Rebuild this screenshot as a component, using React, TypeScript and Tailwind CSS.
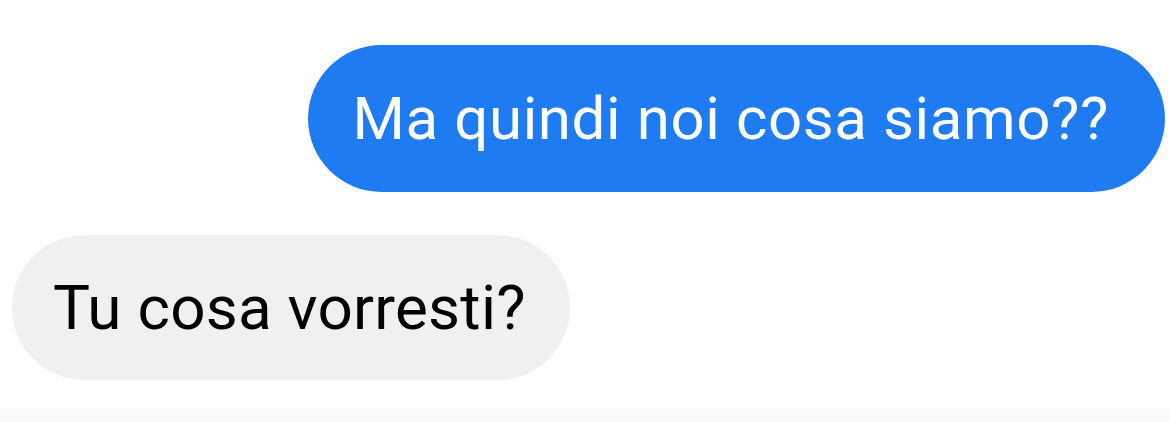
export default function App() {
  return (
    <div className="w-[1170px] h-[422px] bg-white flex flex-col overflow-hidden" style={{ fontFamily: "Roboto, 'Liberation Sans', sans-serif" }}>
      <div className="flex justify-end pr-[5px] pt-[45px]">
        <div className="h-[147px] rounded-full bg-[#1f7bf2] text-white text-[60px] tracking-[0.6px] flex items-center pl-[45px] pr-[56px] leading-none">
          Ma quindi noi cosa siamo??
        </div>
      </div>
      <div className="flex pl-[12px] pt-[43px]">
        <div className="h-[145px] rounded-full bg-[#eff0f0] text-black text-[62px] tracking-[0.25px] flex items-center pl-[41px] pr-[44px] leading-none">
          Tu cosa vorresti?
        </div>
      </div>
      <div className="mt-auto h-[20px] bg-gradient-to-b from-white to-[#f7f8f8]" />
    </div>
  );
}
